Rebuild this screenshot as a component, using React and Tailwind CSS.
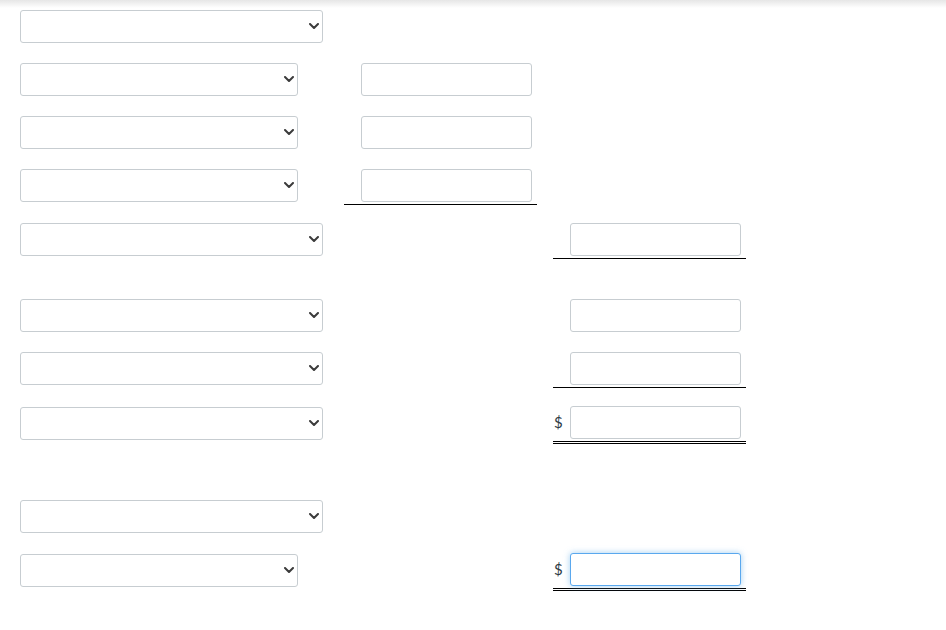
import React from "react";

function Select({ short = false, offset = false }) {
  return (
    <div className={`relative ${short ? "w-[278px]" : "w-[303px]"} ${offset ? "mt-[1px]" : ""}`}>
      <select className="block h-[33px] w-full appearance-none rounded-[3px] border border-[#c7cdd1] bg-white" defaultValue="">
        <option value=""></option>
      </select>
      <svg
        className="pointer-events-none absolute right-[4px] top-[13px]"
        width="10"
        height="6"
        viewBox="0 0 10 6"
        fill="none"
      >
        <path d="M1 1 L5 5 L9 1" stroke="#3b3b3b" strokeWidth="2" strokeLinecap="round" strokeLinejoin="round" />
      </svg>
    </div>
  );
}

function Input({ focused = false }) {
  return (
    <input
      type="text"
      className={`block h-[33px] w-[171px] rounded-[3px] border bg-white outline-none ${
        focused
          ? "border-[#5aa8ee] shadow-[0_0_6px_rgba(102,175,233,0.6)]"
          : "border-[#c7cdd1]"
      }`}
    />
  );
}

function Cell({ line = null, dollar = false, focused = false }) {
  const border =
    line === "single"
      ? "border-b border-black pb-[2px]"
      : line === "double"
      ? "border-b-[3px] border-double border-black pb-[2px]"
      : "";
  return (
    <div className={`w-[193px] pr-[5px] ${border}`}>
      <div className="flex items-center">
        <div className="w-[17px] pl-[1px] text-[15px] leading-none text-[#2d3b45]" style={{ fontFamily: "Lato, 'Liberation Sans', sans-serif" }}>
          {dollar ? "$" : ""}
        </div>
        <Input focused={focused} />
      </div>
    </div>
  );
}

function Empty() {
  return <div className="w-[193px]" />;
}

function Row({ mt, children }) {
  return <div className={`flex items-start ${mt}`}>{children}</div>;
}

function Left({ children }) {
  return <div className="w-[324px]">{children}</div>;
}

export default function App() {
  return (
    <div className="min-h-[630px] w-[946px] bg-white" style={{ fontFamily: "Lato, 'Liberation Sans', sans-serif" }}>
      <div className="h-[8px] bg-gradient-to-b from-[#e6e6e6] to-white" />
      <div className="pl-[20px]">
        <Row mt="mt-[2px]">
          <Left><Select /></Left>
        </Row>
        <Row mt="mt-[20px]">
          <Left><Select short /></Left>
          <Cell />
        </Row>
        <Row mt="mt-[20px]">
          <Left><Select short /></Left>
          <Cell />
        </Row>
        <Row mt="mt-[20px]">
          <Left><Select short /></Left>
          <Cell line="single" />
        </Row>
        <Row mt="mt-[18px]">
          <Left><Select /></Left>
          <Empty />
          <div className="w-[16px]" />
          <Cell line="single" />
        </Row>
        <Row mt="mt-[40px]">
          <Left><Select /></Left>
          <Empty />
          <div className="w-[16px]" />
          <Cell />
        </Row>
        <Row mt="mt-[20px]">
          <Left><Select /></Left>
          <Empty />
          <div className="w-[16px]" />
          <Cell line="single" />
        </Row>
        <Row mt="mt-[18px]">
          <Left><Select offset /></Left>
          <Empty />
          <div className="w-[16px]" />
          <Cell line="double" dollar />
        </Row>
        <Row mt="mt-[56px]">
          <Left><Select /></Left>
        </Row>
        <Row mt="mt-[20px]">
          <Left><Select short offset /></Left>
          <Empty />
          <div className="w-[16px]" />
          <Cell line="double" dollar focused />
        </Row>
      </div>
    </div>
  );
}
